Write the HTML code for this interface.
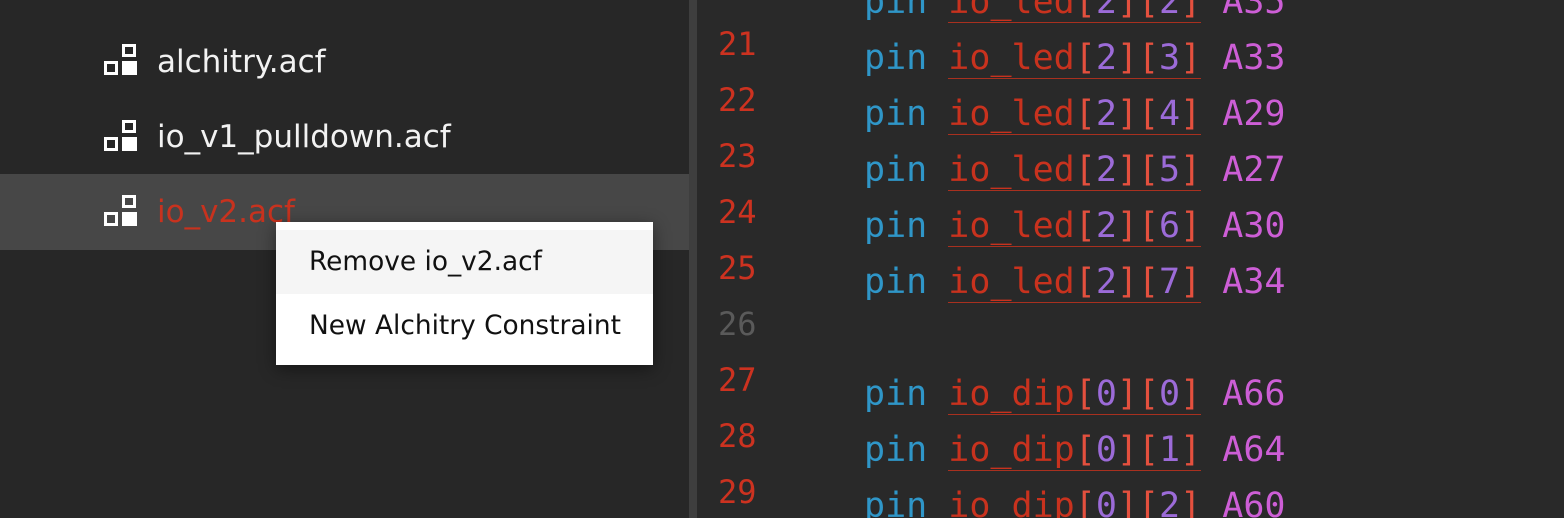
<!DOCTYPE html>
<html><head><style>
html,body{margin:0;width:1564px;height:518px;overflow:hidden}
body{background:#272727;position:relative;font-family:"Liberation Sans",sans-serif}
.left{position:absolute;left:0;top:0;width:689px;height:518px;background:#272727}
.div{position:absolute;left:689px;top:0;width:8px;height:518px;background:#3e3e3e}
.right{position:absolute;left:697px;top:0;width:867px;height:518px;background:#292929}
.row{position:absolute;left:0;width:689px;height:76px}
.row .t{position:absolute;left:157px;top:0;line-height:76px;font-size:31px;font-family:"DejaVu Sans",sans-serif;color:#f2f2f2}
.ic{position:absolute;left:104px;width:34px;height:32px}
.ic i{position:absolute;box-sizing:border-box}
.a{left:18px;top:0;width:14px;height:13px;border:3.5px solid #fff}
.b{left:0;top:17px;width:14px;height:14px;border:3.5px solid #fff}
.c{left:18px;top:17px;width:15px;height:14px;background:#fff}
.menu{position:absolute;left:276px;top:222px;width:377px;height:143px;background:#fff;box-shadow:0 4px 16px rgba(0,0,0,.45)}
.mi{position:absolute;left:0;width:377px;height:64px;line-height:64px;font-size:26.4px;font-family:"DejaVu Sans",sans-serif;color:#111;padding-left:33px;box-sizing:border-box;white-space:nowrap}
.ln{position:absolute;left:718px;font-family:"DejaVu Sans Mono",monospace;font-size:32px;color:#cc3220;line-height:56px}
.cl{position:absolute;left:864px;font-family:"DejaVu Sans Mono",monospace;font-size:35px;line-height:56px;height:56px;white-space:pre}
.k{color:#2f96c8}.n{color:#c8321e}.br{color:#e4503e}.d{color:#9c6bd8}.v{color:#cd5ed6}
.u{border-bottom:1.5px solid #a8301f;display:inline-block;line-height:40px}
</style></head><body>
<div class="left">
 <div class="row" style="top:24px"><div class="ic" style="top:20px"><i class="a"></i><i class="b"></i><i class="c"></i></div><div class="t">alchitry.acf</div></div>
 <div class="row" style="top:99px"><div class="ic" style="top:21px"><i class="a"></i><i class="b"></i><i class="c"></i></div><div class="t">io_v1_pulldown.acf</div></div>
 <div class="row" style="top:174px;background:#474747"><div class="ic" style="top:21px"><i class="a"></i><i class="b"></i><i class="c"></i></div><div class="t" style="color:#c8321e">io_v2.acf</div></div>
</div>
<div class="div"></div>
<div class="right"></div>
<div class="menu">
 <div class="mi" style="top:8px;background:#f5f5f5">Remove io_v2.acf</div>
 <div class="mi" style="top:72px">New Alchitry Constraint</div>
</div>

<div class="ln" style="top:16px">21</div>
<div class="ln" style="top:72px">22</div>
<div class="ln" style="top:128px">23</div>
<div class="ln" style="top:184px">24</div>
<div class="ln" style="top:240px">25</div>
<div class="ln" style="top:296px;color:#5a5a5a">26</div>
<div class="ln" style="top:352px">27</div>
<div class="ln" style="top:408px">28</div>
<div class="ln" style="top:464px">29</div>

<div class="cl" style="top:-26px"><span class="k">pin</span> <span class="u"><span class="n">io_led</span><span class="br">[</span><span class="d">2</span><span class="br">][</span><span class="d">2</span><span class="br">]</span></span> <span class="v">A35</span></div>
<div class="cl" style="top:30px"><span class="k">pin</span> <span class="u"><span class="n">io_led</span><span class="br">[</span><span class="d">2</span><span class="br">][</span><span class="d">3</span><span class="br">]</span></span> <span class="v">A33</span></div>
<div class="cl" style="top:86px"><span class="k">pin</span> <span class="u"><span class="n">io_led</span><span class="br">[</span><span class="d">2</span><span class="br">][</span><span class="d">4</span><span class="br">]</span></span> <span class="v">A29</span></div>
<div class="cl" style="top:142px"><span class="k">pin</span> <span class="u"><span class="n">io_led</span><span class="br">[</span><span class="d">2</span><span class="br">][</span><span class="d">5</span><span class="br">]</span></span> <span class="v">A27</span></div>
<div class="cl" style="top:198px"><span class="k">pin</span> <span class="u"><span class="n">io_led</span><span class="br">[</span><span class="d">2</span><span class="br">][</span><span class="d">6</span><span class="br">]</span></span> <span class="v">A30</span></div>
<div class="cl" style="top:254px"><span class="k">pin</span> <span class="u"><span class="n">io_led</span><span class="br">[</span><span class="d">2</span><span class="br">][</span><span class="d">7</span><span class="br">]</span></span> <span class="v">A34</span></div>
<div class="cl" style="top:366px"><span class="k">pin</span> <span class="u"><span class="n">io_dip</span><span class="br">[</span><span class="d">0</span><span class="br">][</span><span class="d">0</span><span class="br">]</span></span> <span class="v">A66</span></div>
<div class="cl" style="top:422px"><span class="k">pin</span> <span class="u"><span class="n">io_dip</span><span class="br">[</span><span class="d">0</span><span class="br">][</span><span class="d">1</span><span class="br">]</span></span> <span class="v">A64</span></div>
<div class="cl" style="top:478px"><span class="k">pin</span> <span class="u"><span class="n">io_dip</span><span class="br">[</span><span class="d">0</span><span class="br">][</span><span class="d">2</span><span class="br">]</span></span> <span class="v">A60</span></div>
</body></html>
